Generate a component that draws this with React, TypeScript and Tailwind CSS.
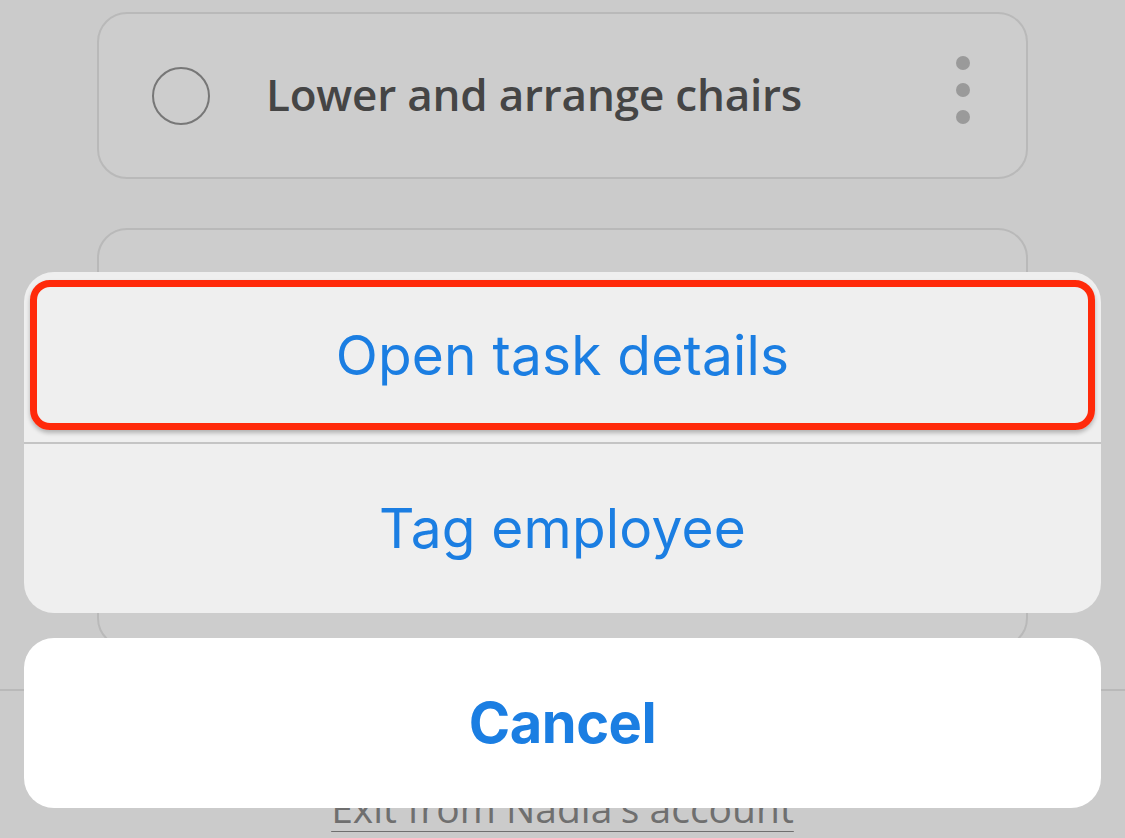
import React from 'react';

const TaskCard: React.FC<{ title?: string; className?: string }> = ({ title, className }) => (
  <div className={`mx-[97px] rounded-[30px] border-2 border-[#b9b9b9] bg-[#cdcdcd] flex items-center pl-[53px] pr-[56px] ${className ?? ''}`}>
    {title && (
      <>
        <div className="w-[58px] h-[58px] rounded-full border-2 border-[#777]" />
        <span className="ml-[56px] flex-1 text-[44px] font-semibold text-[#454545] tracking-[-0.2px] -mt-[4px]" style={{ fontFamily: '"Open Sans", Lato, sans-serif' }}>
          {title}
        </span>
        <div className="flex flex-col gap-[13px] -mt-[12px]">
          <span className="w-[14px] h-[14px] rounded-full bg-[#9a9a9a]" />
          <span className="w-[14px] h-[14px] rounded-full bg-[#9a9a9a]" />
          <span className="w-[14px] h-[14px] rounded-full bg-[#9a9a9a]" />
        </div>
      </>
    )}
  </div>
);

const App: React.FC = () => {
  return (
    <div className="relative w-[1125px] h-[838px] overflow-hidden bg-[#cbcbcb]">
      {/* list underneath */}
      <div className="flex flex-col pt-[12px]">
        <TaskCard title="Lower and arrange chairs" className="h-[167px]" />
        <TaskCard className="h-[420px] mt-[49px]" />
      </div>
      <div className="absolute left-0 right-0 top-[689px] bottom-0 border-t-2 border-[#b9b9b9] bg-[#cbcbcb] flex justify-center">
        <span className="mt-[88px] text-[39px] text-[#6f6f6f] underline decoration-1 underline-offset-[8px]" style={{ fontFamily: '"Open Sans", Lato, sans-serif' }}>
          Exit from Nadia's account
        </span>
      </div>

      {/* action sheet */}
      <div className="absolute inset-0 flex flex-col px-[24px] pt-[272px]" style={{ fontFamily: 'Inter, Roboto, sans-serif' }}>
        <div className="rounded-[30px] bg-[#efefef] flex flex-col overflow-hidden">
          <div className="h-[170px] p-[6px] pt-[8px] pb-[12px] flex">
            <div className="flex-1 rounded-[20px] border-[7px] border-[#ff2a0a] flex items-center justify-center shadow-[0_3px_4px_rgba(0,0,0,0.25)]">
              <span className="text-[55px] text-[#1b7ee2] tracking-[0.2px]">Open task details</span>
            </div>
          </div>
          <div className="h-[2px] bg-[#c4c4c4]" />
          <div className="h-[169px] flex items-center justify-center">
            <span className="text-[55px] text-[#1b7ee2] tracking-[0.2px]">Tag employee</span>
          </div>
        </div>
        <div className="mt-[25px] h-[170px] rounded-[30px] bg-white flex items-center justify-center">
          <span className="text-[56px] font-bold text-[#1b7ee2] tracking-[-0.5px]">Cancel</span>
        </div>
      </div>
    </div>
  );
};

export default App;
